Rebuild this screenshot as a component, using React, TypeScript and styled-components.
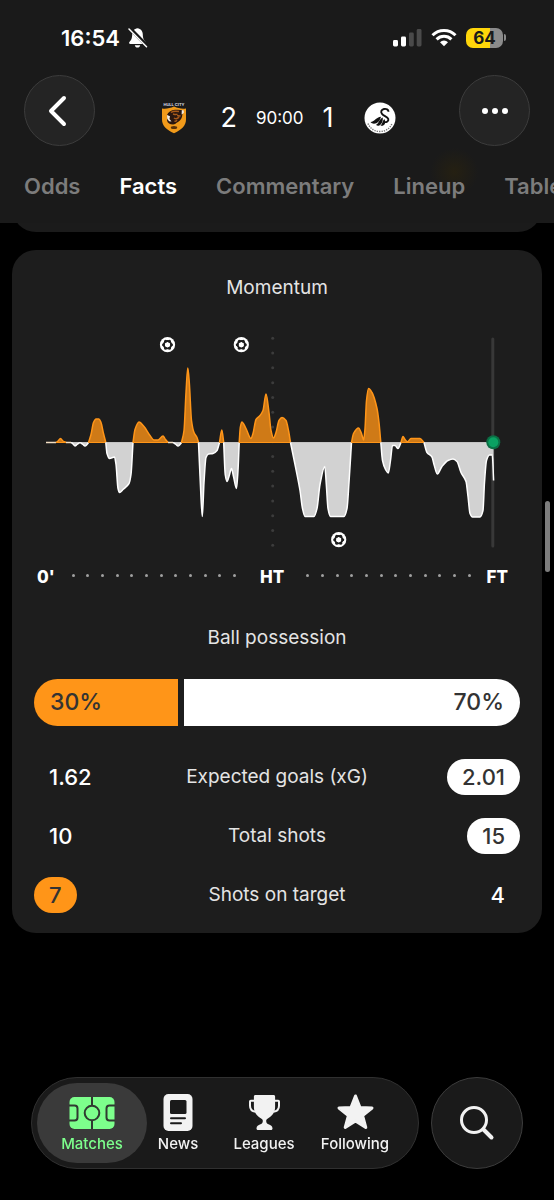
import React from "react";
import styled, { createGlobalStyle } from "styled-components";

const Global = createGlobalStyle`
  * { box-sizing: border-box; }
  body {
    margin: 0;
    background: #000;
    color: #fff;
    font-family: Inter, "Liberation Sans", sans-serif;
    overflow-x: hidden;
  }
  button { font: inherit; color: inherit; padding: 0; }
  a { color: inherit; text-decoration: none; }
  svg { display: block; flex: none; }
`;

const HOME = "#ff9518";
const HOME_FILL = "#cf7a17";
const AWAY = "#ffffff";
const AWAY_FILL = "#d2d2d2";
const CARD = "#1d1d1d";

const Page = styled.div`
  min-height: 100vh;
  padding-bottom: 160px;
`;

const Header = styled.header`
  position: relative;
  z-index: 1;
  background:
    radial-gradient(circle at 82% 172px, #252012 0, transparent 24px),
    #1a1a1a;
  overflow: hidden;
`;

const StatusBar = styled.div`
  display: flex;
  justify-content: space-between;
  align-items: center;
  height: 75px;
  padding: 0 48px 0 61px;
`;

const StatusGroup = styled.div<{ $gap: number }>`
  display: flex;
  align-items: center;
  gap: ${(p) => p.$gap}px;
`;

const Clock = styled.time`
  font-size: 22px;
  line-height: 28px;
  font-weight: 600;
`;

const Battery = styled.div`
  display: flex;
  align-items: center;
  gap: 1px;
`;

const BatteryBody = styled.div`
  width: 37px;
  height: 20px;
  border-radius: 7px;
  background: linear-gradient(90deg, #ffd60a 64%, #8b8b8b 64%);
  color: #1a1a1a;
  font-size: 17px;
  line-height: 20px;
  font-weight: 700;
  text-align: center;
`;

const BatteryCap = styled.div`
  width: 2px;
  height: 7px;
  border-radius: 0 2px 2px 0;
  background: #8b8b8b;
`;

const MatchBar = styled.div`
  display: flex;
  justify-content: space-between;
  align-items: flex-end;
  padding: 0 24px;
`;

const RoundButton = styled.button<{ $size: number; $bg: string }>`
  display: grid;
  place-items: center;
  flex: none;
  width: ${(p) => p.$size}px;
  height: ${(p) => p.$size}px;
  border: 1px solid #3c3c3c;
  border-radius: 50%;
  background: ${(p) => p.$bg};
`;

const Score = styled.div`
  display: grid;
  grid-template-columns: 32px 174px 32px;
  align-items: center;
  justify-items: center;
  height: 56px;
`;

const ScoreLine = styled.div`
  display: flex;
  align-items: center;
  gap: 19px;
  font-size: 27px;
  line-height: 32px;
`;

const Minute = styled.span`
  font-size: 17px;
  line-height: 24px;
`;

const Tabs = styled.nav`
  display: flex;
  gap: 39px;
  padding: 24px 24px 21px;
  white-space: nowrap;
`;

const Tab = styled.a<{ $active?: boolean }>`
  font-size: 22px;
  line-height: 32px;
  font-weight: 600;
  color: ${(p) => (p.$active ? "#fff" : "#7c7c7c")};
`;

const CardTail = styled.div`
  height: 34px;
  margin: -25px 12px 18px;
  border-radius: 0 0 24px 24px;
  background: #1b1b1b;
`;

const Card = styled.section`
  margin: 0 12px;
  padding: 23px 22px 9px;
  border-radius: 24px;
  background: ${CARD};
`;

const Title = styled.h2`
  margin: 0;
  font-size: 19px;
  line-height: 30px;
  font-weight: 400;
  color: #e4e4e4;
  text-align: center;
`;

const Chart = styled.svg`
  width: 100%;
  height: auto;
  margin-top: 27px;
`;

const Axis = styled.div`
  display: flex;
  align-items: center;
  margin-top: 6px;
  padding: 0 12px 0 3px;
  font-size: 17px;
  line-height: 30px;
  font-weight: 800;
`;

const Dots = styled.div<{ $before: number; $after: number }>`
  flex: 1;
  display: flex;
  justify-content: space-between;
  margin: 0 ${(p) => p.$after}px 4px ${(p) => p.$before}px;
`;

const Dot = styled.i`
  width: 3px;
  height: 3px;
  border-radius: 50%;
  background: #a0a0a0;
`;

const Possession = styled.div`
  margin-top: 31px;
`;

const Bar = styled.div<{ $home: number; $away: number }>`
  display: grid;
  grid-template-columns: ${(p) => p.$home}fr ${(p) => p.$away}fr;
  gap: 6px;
  height: 47px;
  margin-top: 26px;
  border-radius: 24px;
  overflow: hidden;
`;

const Share = styled.div<{ $color: string; $end?: boolean }>`
  padding: 0 16px;
  background: ${(p) => p.$color};
  color: #333;
  font-size: 23px;
  line-height: 47px;
  font-weight: 500;
  text-align: ${(p) => (p.$end ? "right" : "left")};
`;

const StatTable = styled.table`
  width: 100%;
  margin-top: 21px;
  border-collapse: collapse;
  table-layout: fixed;
`;

const StatRow = styled.tr`
  height: 59px;
`;

const StatCell = styled.td<{ $end?: boolean }>`
  width: 25%;
  padding: 0;
  text-align: ${(p) => (p.$end ? "right" : "left")};
`;

const StatName = styled.th`
  padding: 0;
  font-size: 19px;
  line-height: 24px;
  font-weight: 400;
  color: #e4e4e4;
`;

const Value = styled.span<{ $bg?: string }>`
  display: inline-block;
  padding: 0 15px;
  border-radius: 18px;
  font-size: 22px;
  line-height: 36px;
  font-weight: 500;
  background: ${(p) => p.$bg ?? "transparent"};
  color: ${(p) => (p.$bg ? "#333" : "#fff")};
`;

const ScrollThumb = styled.div`
  position: fixed;
  top: 501px;
  right: 4px;
  width: 5px;
  height: 71px;
  border-radius: 3px;
  background: #7d7d7d;
`;

const Dock = styled.div`
  position: fixed;
  left: 31px;
  right: 31px;
  bottom: 31px;
  display: flex;
  gap: 12px;
`;

const DockNav = styled.nav`
  flex: 1;
  display: grid;
  grid-template-columns: 110fr 62fr 110fr 72fr;
  padding: 5px 27px 5px 5px;
  border: 1px solid #303030;
  border-radius: 46px;
  background: #1a1a1a;
`;

const DockItem = styled.a<{ $active?: boolean }>`
  display: flex;
  flex-direction: column;
  align-items: center;
  height: 80px;
  padding-top: 10px;
  border-radius: 40px;
  background: ${(p) => (p.$active ? "#3a3a3a" : "transparent")};
  color: ${(p) => (p.$active ? "#7dff8c" : "#f2f2f2")};
  font-size: 15px;
  line-height: 26px;
  font-weight: 500;
`;

/* Momentum samples: [x, value]; positive is home pressure, negative is away. */
const ZERO = 442.5;
const momentum: [number, number][] = [
  [46, 0], [56, 0], [58, 1.5], [60.5, 4], [63, 1.5], [66, 0], [71, 0], [73, -1.5], [75, -3.5], [77, -2], [80, 0],
  [83, -2], [85, -3.5], [87, -2], [88.5, 0], [91, 8], [93.5, 20], [96, 23.5], [99, 23.5], [101, 20], [103.5, 9], [105.8, 0],
  [107, -11], [109.5, -16], [114.5, -14.5], [116, -22], [118, -46], [119.5, -50], [123, -47], [129, -41], [131, -32], [133, 0],
  [135, 13], [139, 20.5], [144, 16], [150, 7], [154, 2.5], [158, 2.5], [163, 6.5], [165.5, 3], [168, 0],
  [173, 0], [176, -2], [178, -3.5], [180, -2], [181.5, 0], [184, 12], [186, 50], [187.8, 74.5], [189.3, 60], [191.5, 22], [194, 10], [197, 5], [198.5, 0],
  [200.3, -40], [202.3, -74], [204, -40], [206, -15], [208.5, -11.5], [213, -11], [217, -8], [219.5, 0],
  [221.8, 12.5], [223.7, 0], [225.2, -32], [227, -39], [229, -34], [231.5, -26], [233.5, -34], [236.5, -46], [238, -28], [239.2, 0],
  [240.3, 15], [241.8, 20.5], [246, 14], [251, 4], [253, 9], [256, 23], [260, 27], [263, 32], [266, 48.5], [269, 30], [271, 12], [273.5, 4.5], [276, 10], [279, 22], [282, 25], [286, 22], [288.5, 12], [290.5, 0],
  [295, -22], [300, -48], [302.5, -66], [305, -74], [309, -74], [314, -74], [317, -66], [320, -42], [324.8, -24], [326.3, -42], [328, -66], [330.5, -74], [336, -74], [344, -74], [347, -66], [349, -40], [351.5, 0],
  [353.5, 9], [358.5, 14.5], [361.5, 9], [363.7, 2.5], [365, 14], [366.5, 42], [368.5, 54], [372, 50], [377, 34], [379, 20], [380.8, 0],
  [382.5, -18], [385.5, -27], [388.3, -30.5], [390.5, -18], [392.5, -3], [395, -3], [398, -6], [401, 0],
  [403, 6], [405, 3], [407.5, 0.8], [411, 4], [420, 4], [424, 0],
  [427, -10], [432, -14.5], [434, -22], [437.3, -31.5], [442, -24], [448, -18], [453, -16.5], [457, -19], [461, -30], [466, -39], [468, -54], [470, -71], [472.5, -74.5], [480, -74.5], [483, -68], [484.5, -40], [486.5, -18], [489.5, -12.5], [492.3, -12.5], [493.6, -38],
];

/* Monotone cubic through the samples, so peaks stay at their sampled height. */
function curve(pts: [number, number][]) {
  const n = pts.length;
  const slope = pts.slice(1).map((p, i) => (p[1] - pts[i][1]) / (p[0] - pts[i][0]));
  const tan = pts.map((_, i) => {
    if (i === 0) return slope[0];
    if (i === n - 1) return slope[n - 2];
    const a = slope[i - 1];
    const b = slope[i];
    return a * b <= 0 ? 0 : (2 * a * b) / (a + b);
  });
  let d = `M${pts[0][0]} ${ZERO - pts[0][1]}`;
  for (let i = 0; i < n - 1; i++) {
    const [x0, y0] = pts[i];
    const [x1, y1] = pts[i + 1];
    const h = (x1 - x0) / 3;
    d += `C${x0 + h} ${ZERO - (y0 + tan[i] * h)} ${x1 - h} ${ZERO - (y1 - tan[i + 1] * h)} ${x1} ${ZERO - y1}`;
  }
  return d;
}

function runs(pts: [number, number][]) {
  const out: [number, number][][] = [];
  let start = 0;
  for (let i = 1; i < pts.length; i++) {
    if (pts[i][1] === 0 || i === pts.length - 1) {
      out.push(pts.slice(start, i + 1));
      start = i;
    }
  }
  return out;
}

const Goal = ({ x, y }: { x: number; y: number }) => (
  <g transform={`translate(${x} ${y})`}>
    <circle r="7.6" fill="#fff" />
    <circle r="3.7" fill="none" stroke={CARD} strokeWidth="1.8" />
    {[0, 1, 2, 3, 4, 5].map((i) => {
      const a = (i * 60 * Math.PI) / 180;
      return <circle key={i} cx={Math.cos(a) * 4} cy={Math.sin(a) * 4} r="1.5" fill={CARD} />;
    })}
  </g>
);

const MomentumChart = () => (
  <Chart viewBox="34 330 486 226" role="img" aria-label="Momentum">
    {Array.from({ length: 15 }, (_, i) => (
      <circle key={i} cx="272.7" cy={338.3 + i * 14.78} r="1.5" fill="#3c3c3c" />
    ))}
    <path d="M492.8 339v207" stroke="#383838" strokeWidth="3" strokeLinecap="round" />
    {runs(momentum).map((run, i) => {
      const peak = run.reduce((s, p) => s + p[1], 0);
      const home = peak > 0;
      const last = run[run.length - 1];
      const flat = peak === 0;
      const line = curve(run);
      return (
        <g key={i}>
          <path d={`${line}L${last[0]} ${ZERO}L${run[0][0]} ${ZERO}Z`} fill={home ? HOME_FILL : AWAY_FILL} />
          <path d={`M${run[0][0]} ${ZERO}H${last[0]}`} stroke={home ? HOME : flat ? "#f3dfc4" : "#c4c4c4"} strokeWidth="1" />
          <path d={line} fill="none" stroke={home ? HOME : flat ? "#f3dfc4" : AWAY} strokeWidth="1.5" strokeLinejoin="round" />
        </g>
      );
    })}
    <circle cx="493.3" cy="442.3" r="7" fill="#0b6f45" />
    <circle cx="493.3" cy="442.3" r="5" fill="#0aa162" />
    <Goal x={167.5} y={344.7} />
    <Goal x={241.3} y={344.7} />
    <Goal x={338.7} y={539.7} />
  </Chart>
);

const BellOff = () => (
  <svg width="20" height="22" viewBox="0 0 20 22">
    <path d="M9.5 1.2c-3.3.5-5.3 3-5.3 6.3 0 4.5-1.5 6-2.8 7.5-.7.9-.3 2 1 2h14.2c1.3 0 1.7-1.1 1-2-1.3-1.5-2.8-3-2.8-7.5 0-3.3-2-5.8-5.3-6.3z" fill="#fff" />
    <path d="M6.8 18.3h5.4c-.3 1.4-1.3 2.3-2.7 2.3s-2.4-.9-2.7-2.3z" fill="#fff" />
    <path d="M1.8 1.2l17 17.5" stroke="#1a1a1a" strokeWidth="3.6" />
    <path d="M1 2l17.5 17.8" stroke="#fff" strokeWidth="1.5" strokeLinecap="round" />
  </svg>
);

const Signal = () => (
  <svg width="29" height="19" viewBox="0 0 29 19">
    <rect x="0" y="12" width="5" height="6.5" rx="1.4" fill="#fff" />
    <rect x="8" y="8.5" width="5" height="10" rx="1.4" fill="#fff" />
    <rect x="16" y="4.5" width="4.8" height="14" rx="1.4" fill="#4a4a4a" />
    <rect x="23.7" y="1" width="4.8" height="17.5" rx="1.4" fill="#4a4a4a" />
  </svg>
);

const Wifi = () => (
  <svg width="26" height="19" viewBox="0 0 26 19">
    <g fill="none" stroke="#fff" strokeWidth="3">
      <path d="M1.5 7.2a16.3 16.3 0 0 1 23 0" />
      <path d="M5.6 11.4a10.5 10.5 0 0 1 14.8 0" />
    </g>
    <path d="M13 18.2l-4-4a5.7 5.7 0 0 1 8 0z" fill="#fff" />
  </svg>
);

const HullBadge = () => (
  <svg width="28" height="34" viewBox="0 0 28 34" role="img" aria-label="Hull City">
    <text x="14" y="4.5" textAnchor="middle" fontSize="4" fontWeight="700" fill="#d5dbe2">HULL CITY</text>
    <path d="M2 7.5c4 .6 8-.2 12-2 4 1.800 8 2.600 12 2v11c0 6.500-4.500 10-12 13.800C6.500 28.500 2 25 2 18.500z" fill="#f19a1a" />
    <path d="M7 14c1-3 4-5 8-5.300 3-.2 6 .3 8 .3-1.500 1.200-.5 2.500-.6 4.500-.2 3-1.400 6-4.400 7.500-2 1-3 2.500-5 2.500-3 0-5.500-1.500-6-4 .8-1.500.8-3.500 0-5.500z" fill="#2a1710" />
    <path d="M11 11.500c2-1.500 5-1.500 8-1M13 13c2 .5 3 1 4.500 0M17 14.500c1.500 0 2.500 1 3.500 0M14 17c2 1.500 3.500 1 5-1M14.500 20c1 .3 2 0 2.500-.8" fill="none" stroke="#a75a1b" strokeWidth="1.5" />
    <path d="M7 14l3 1.200L9.500 18l2 2.500-2.500-.2-1.800-2.800zM21.800 9l2 .5v2.500l-2.200 1.500z" fill="#f3ece2" />
    <ellipse cx="14" cy="26.5" rx="3.2" ry="1.5" fill="#5a3208" />
  </svg>
);

const SwanBadge = () => (
  <svg width="32" height="32" viewBox="0 0 32 32" role="img" aria-label="Swansea City">
    <circle cx="16" cy="16" r="15.5" fill="#fff" />
    <path d="M24.500 9.800c0-2.300-2.200-3.300-4.500-2.800-2.700.6-3.600 3-2 4.900 1.800 2.200 5.600 2.600 6.300 5.200.5 2-1.400 3.300-4.400 3" fill="none" stroke="#111" strokeWidth="1.9" />
    <path d="M6.500 20c4.500-.5 5.500-5 10.500-5.300-1 4-3.500 7-7 7-1.500 0-2.600-.6-3.500-1.700z" fill="#111" />
    <path d="M12 22.800c2.800-1.200 3-5.500 6.700-7.300.6 3-1 7.500-4 8.300-1.200.2-2.100-.1-2.700-1z" fill="#111" />
    <path d="M16.500 23.500c2-1.500 1.800-4.500 3.700-6.500 2 2.500 1 6-1.500 6.700-.8.300-1.600.2-2.200-.2z" fill="#111" />
    <path d="M4 21.500c2 5 6.500 8 12 8s10-3 12-8" fill="none" stroke="#777" strokeWidth="1.4" strokeDasharray="1.3 1.1" />
  </svg>
);

const MatchesIcon = () => (
  <svg width="46" height="38" viewBox="0 0 46 38">
    <rect x=".5" y="4" width="45" height="32" rx="5" fill="currentColor" />
    <g fill="none" stroke="#303a31" strokeWidth="2">
      <path d="M23 4v8M23 28v8" />
      <circle cx="23" cy="20" r="7.3" />
      <path d="M0 12.500h5.500q3 0 3 3v9q0 3-3 3H0M46 12.500h-5.500q-3 0-3 3v9q0 3 3 3H46" />
    </g>
  </svg>
);

const NewsIcon = () => (
  <svg width="46" height="38" viewBox="0 0 46 38">
    <rect x="8.5" y="1" width="29" height="37" rx="5" fill="currentColor" />
    <rect x="15" y="7" width="16.5" height="14" rx="1.5" fill="#1a1a1a" />
    <path d="M16 25.200h14M16 30.200h10" stroke="#1a1a1a" strokeWidth="2" strokeLinecap="round" />
  </svg>
);

const TrophyIcon = () => (
  <svg width="46" height="38" viewBox="0 0 46 38">
    <path d="M14.500 2h18c1 0 1.600.6 1.600 1.600V14c0 6-3.600 9.500-7.600 11.700-1 .6-1.300 1.200-1.300 2.200 0 1.600.6 2.700 2.300 3.300 2.400.8 3.800 1.600 4 4 .1 1.200-.5 1.800-1.600 1.800H17.100c-1.100 0-1.700-.6-1.600-1.800.2-2.400 1.600-3.200 4-4 1.700-.6 2.300-1.700 2.300-3.300 0-1-.3-1.600-1.300-2.200C16.500 23.500 12.900 20 12.900 14V3.600c0-1 .6-1.600 1.600-1.600z" fill="currentColor" />
    <path d="M13.500 7.700H9.800c-.5 0-.8.3-.8.800v4.300c0 3.400 2 5.500 5.500 5.900M33.500 7.700h3.700c.5 0 .8.3.8.800v4.300c0 3.400-2 5.500-5.500 5.900" fill="none" stroke="currentColor" strokeWidth="2" strokeLinejoin="round" />
  </svg>
);

const StarIcon = () => (
  <svg width="46" height="38" viewBox="0 0 46 38">
    <path d="M23.500 3l4.400 11.400 12.100.6-9.400 7.700 3.200 11.800-10.300-6.600-10.300 6.600 3.200-11.800L7 15l12.100-.6z" fill="currentColor" stroke="currentColor" strokeWidth="3" strokeLinejoin="round" />
  </svg>
);

const stats = [
  { name: "Expected goals (xG)", home: "1.62", away: "2.01", lead: "away" },
  { name: "Total shots", home: "10", away: "15", lead: "away" },
  { name: "Shots on target", home: "7", away: "4", lead: "home" },
];

const tabs = ["Odds", "Facts", "Commentary", "Lineup", "Table"];

const dock = [
  { label: "Matches", Icon: MatchesIcon },
  { label: "News", Icon: NewsIcon },
  { label: "Leagues", Icon: TrophyIcon },
  { label: "Following", Icon: StarIcon },
];

const AxisDots = ({ before, after }: { before: number; after: number }) => (
  <Dots $before={before} $after={after}>
    {Array.from({ length: 12 }, (_, i) => (
      <Dot key={i} />
    ))}
  </Dots>
);

export default function App() {
  return (
    <Page>
      <Global />
      <Header>
        <StatusBar>
          <StatusGroup $gap={8}>
            <Clock>16:54</Clock>
            <BellOff />
          </StatusGroup>
          <StatusGroup $gap={9}>
            <Signal />
            <Wifi />
            <Battery>
              <BatteryBody>64</BatteryBody>
              <BatteryCap />
            </Battery>
          </StatusGroup>
        </StatusBar>
        <MatchBar>
          <RoundButton $size={71} $bg="#242424" aria-label="Back">
            <svg width="34" height="34" viewBox="0 0 34 34">
              <path d="M21 4L8 17l13 13" fill="none" stroke="#fff" strokeWidth="4" strokeLinecap="round" strokeLinejoin="round" />
            </svg>
          </RoundButton>
          <Score>
            <HullBadge />
            <ScoreLine>
              <span>2</span>
              <Minute>90:00</Minute>
              <span>1</span>
            </ScoreLine>
            <SwanBadge />
          </Score>
          <RoundButton $size={71} $bg="#242424" aria-label="More">
            <svg width="28" height="8" viewBox="0 0 28 8" fill="#fff">
              <circle cx="4" cy="4" r="3" />
              <circle cx="14" cy="4" r="3" />
              <circle cx="24" cy="4" r="3" />
            </svg>
          </RoundButton>
        </MatchBar>
        <Tabs>
          {tabs.map((t) => (
            <Tab key={t} href={`#${t.toLowerCase()}`} $active={t === "Facts"}>
              {t}
            </Tab>
          ))}
        </Tabs>
      </Header>
      <CardTail />
      <main>
        <Card>
          <Title>Momentum</Title>
          <MomentumChart />
          <Axis>
            <span>0'</span>
            <AxisDots before={17} after={24} />
            <span>HT</span>
            <AxisDots before={22} after={16} />
            <span>FT</span>
          </Axis>
          <Possession>
            <Title>Ball possession</Title>
            <Bar $home={30} $away={70}>
              <Share $color={HOME}>30%</Share>
              <Share $color={AWAY} $end>70%</Share>
            </Bar>
          </Possession>
          <StatTable>
            <tbody>
              {stats.map((s) => (
                <StatRow key={s.name}>
                  <StatCell>
                    <Value $bg={s.lead === "home" ? HOME : undefined}>{s.home}</Value>
                  </StatCell>
                  <StatName scope="row">{s.name}</StatName>
                  <StatCell $end>
                    <Value $bg={s.lead === "away" ? AWAY : undefined}>{s.away}</Value>
                  </StatCell>
                </StatRow>
              ))}
            </tbody>
          </StatTable>
        </Card>
      </main>
      <ScrollThumb />
      <Dock>
        <DockNav>
          {dock.map(({ label, Icon }) => (
            <DockItem key={label} href={`#${label.toLowerCase()}`} $active={label === "Matches"}>
              <Icon />
              {label}
            </DockItem>
          ))}
        </DockNav>
        <RoundButton $size={92} $bg="#1a1a1a" aria-label="Search">
          <svg width="36" height="36" viewBox="0 0 36 36" fill="none" stroke="#f2f2f2" strokeLinecap="round">
            <circle cx="15" cy="15" r="12.5" strokeWidth="3" />
            <path d="M25 25l7.500 7.500" strokeWidth="4" />
          </svg>
        </RoundButton>
      </Dock>
    </Page>
  );
}
